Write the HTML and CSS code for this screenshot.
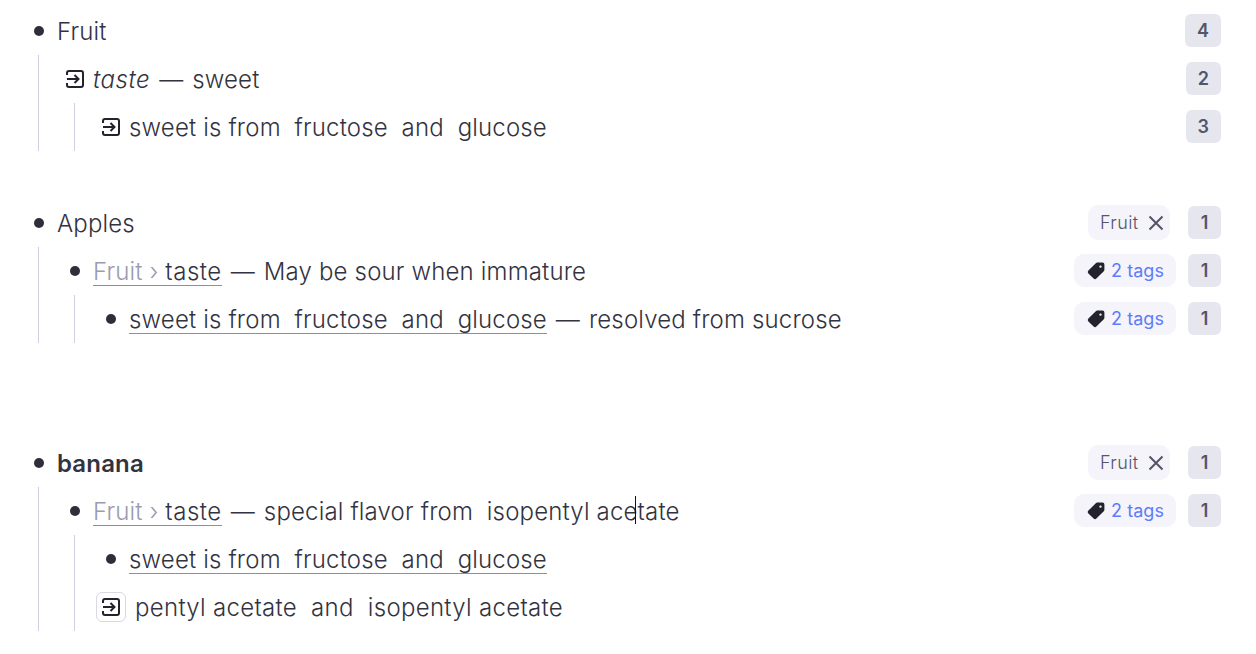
FILE: index.html
```html
<!DOCTYPE html>
<html lang="en">
<head>
  <meta charset="UTF-8" />
  <title>Outline</title>
  <link rel="stylesheet" href="styles.css">
</head>
<body>
  <svg class="sprites" width="0" height="0">
    <symbol id="enter" viewBox="0 0 18 18">
      <path d="M1 5V3a2 2 0 0 1 2-2h12a2 2 0 0 1 2 2v12a2 2 0 0 1-2 2H3a2 2 0 0 1-2-2v-2" fill="none" stroke="currentColor" stroke-width="2"/>
      <path d="M1 9h11M8.500 5l4 4-4 4" fill="none" stroke="currentColor" stroke-width="2"/>
    </symbol>
    <symbol id="tag" viewBox="0 0 18 18">
      <path d="M10.200 .6h5.200a2 2 0 0 1 2 2v5.200a2 2 0 0 1-.6 1.400l-7.400 7.400a2 2 0 0 1-2.800 0l-5.200-5.200a2 2 0 0 1 0-2.800l7.400-7.400a2 2 0 0 1 1.400-.6zM13.500 3.400a1.200 1.200 0 1 0 0 2.400 1.200 1.200 0 0 0 0-2.400z" fill="currentColor" fill-rule="evenodd"/>
    </symbol>
    <symbol id="close" viewBox="0 0 16 16">
      <path d="M1.500 1.500l13 13M14.500 1.500l-13 13" fill="none" stroke="currentColor" stroke-width="2"/>
    </symbol>
  </svg>

  <div class="page">
    <section class="block">
      <div class="row">
        <div class="line"><span class="marker"><i class="dot"></i></span><span class="text">Fruit</span></div>
        <div class="meta"><span class="count">4</span></div>
      </div>
      <div class="children">
        <div class="row">
          <div class="line"><span class="marker"><svg class="icon"><use href="#enter"/></svg></span><span class="text"><em class="term">taste</em> <span class="dash">—</span> sweet</span></div>
          <div class="meta"><span class="count">2</span></div>
        </div>
        <div class="children">
          <div class="row">
            <div class="line"><span class="marker"><svg class="icon"><use href="#enter"/></svg></span><span class="text">sweet is from  fructose  and  glucose</span></div>
            <div class="meta"><span class="count">3</span></div>
          </div>
        </div>
      </div>
    </section>

    <section class="block">
      <div class="row">
        <div class="line"><span class="marker"><i class="dot"></i></span><span class="text">Apples</span></div>
        <div class="meta">
          <span class="pill pill-tall">Fruit <svg class="close"><use href="#close"/></svg></span>
          <span class="count">1</span>
        </div>
      </div>
      <div class="children">
        <div class="row">
          <div class="line"><span class="marker"><i class="dot"></i></span><span class="text"><span class="ref"><span class="crumb">Fruit › </span><span class="term">taste</span></span> <span class="dash">—</span> May be sour when immature</span></div>
          <div class="meta">
            <span class="pill"><svg class="tag"><use href="#tag"/></svg><span class="tags">2 tags</span></span>
            <span class="count">1</span>
          </div>
        </div>
        <div class="children">
          <div class="row">
            <div class="line"><span class="marker"><i class="dot"></i></span><span class="text"><span class="ref">sweet is from  fructose  and  glucose</span> <span class="dash">—</span> resolved from sucrose</span></div>
            <div class="meta">
              <span class="pill"><svg class="tag"><use href="#tag"/></svg><span class="tags">2 tags</span></span>
              <span class="count">1</span>
            </div>
          </div>
        </div>
      </div>
    </section>

    <section class="block block-far">
      <div class="row">
        <div class="line"><span class="marker"><i class="dot"></i></span><strong class="text">banana</strong></div>
        <div class="meta">
          <span class="pill pill-tall">Fruit <svg class="close"><use href="#close"/></svg></span>
          <span class="count">1</span>
        </div>
      </div>
      <div class="children">
        <div class="row">
          <div class="line"><span class="marker"><i class="dot"></i></span><span class="text"><span class="ref"><span class="crumb">Fruit › </span><span class="term">taste</span></span> <span class="dash">—</span> special flavor from  isopentyl ace<span class="caret"></span>tate</span></div>
          <div class="meta">
            <span class="pill"><svg class="tag"><use href="#tag"/></svg><span class="tags">2 tags</span></span>
            <span class="count">1</span>
          </div>
        </div>
        <div class="children">
          <div class="row">
            <div class="line"><span class="marker"><i class="dot"></i></span><span class="text"><span class="ref">sweet is from  fructose  and  glucose</span></span></div>
          </div>
          <div class="row">
            <div class="line"><span class="icon-btn"><svg class="icon"><use href="#enter"/></svg></span><span class="text text-wide">pentyl acetate  and  isopentyl acetate</span></div>
          </div>
        </div>
      </div>
    </section>
  </div>
</body>
</html>
```

FILE: styles.css
```css
* {
  box-sizing: border-box;
}

body {
  margin: 0;
  background: #fff;
  color: #33333f;
  font-family: Inter, "Liberation Sans", sans-serif;
  font-size: 24px;
  font-weight: 350;
  letter-spacing: 0.16px;
}

.sprites {
  position: absolute;
}

.page {
  padding: 7px 35px 0 21px;
}

.block {
  margin-bottom: 48px;
}

.block-far {
  margin-top: 96px;
}

.row {
  display: flex;
  justify-content: space-between;
  align-items: center;
  height: 48px;
  padding-bottom: 1px;
}

.line {
  display: flex;
  align-items: center;
}

.text {
  padding-top: 2px;
  white-space: pre;
}

.text-wide {
  letter-spacing: 0.3px;
}

.term {
  letter-spacing: 0.55px;
}

.marker {
  display: flex;
  justify-content: center;
  align-items: center;
  width: 36px;
  height: 24px;
}

.dot {
  width: 10px;
  height: 10px;
  border-radius: 50%;
  background: #2e2e3a;
}

.icon {
  width: 18px;
  height: 18px;
  color: #23232e;
}

.icon-btn {
  display: flex;
  justify-content: center;
  align-items: center;
  width: 30px;
  height: 30px;
  margin: 0 9px 0 3px;
  border: 1px solid #d9d9e6;
  border-radius: 6px;
}

.children {
  margin-left: 17px;
  padding-left: 18px;
  border-left: 1px solid #cfcfdf;
}

.ref {
  display: inline-block;
  line-height: 27px;
  border-bottom: 1px solid #8f8fa3;
}

.crumb {
  color: #9a9ab0;
}

.dash {
  margin: 0 2px;
}

strong {
  font-weight: 600;
}

.caret {
  position: relative;
}

.caret::after {
  content: "";
  position: absolute;
  left: -3px;
  top: -1px;
  width: 1px;
  height: 28px;
  background: #111;
}

.meta {
  display: flex;
  align-items: center;
  gap: 12px;
  font-size: 18px;
  letter-spacing: 0;
}

.count {
  display: flex;
  justify-content: center;
  align-items: center;
  min-width: 33px;
  height: 33px;
  padding: 0 12px;
  border-radius: 6px;
  background: #e6e6ef;
  color: #55556a;
  font-weight: 600;
}

.pill {
  display: flex;
  align-items: center;
  height: 33px;
  padding: 0 12px;
  border-radius: 10px;
  background: #f4f4fa;
  font-weight: 400;
}

.pill-tall {
  height: 35px;
  margin-right: 6px;
  padding: 0 6px 0 12px;
  color: #55556a;
  font-weight: 350;
  letter-spacing: 0.4px;
  white-space: pre;
}

.tag {
  width: 18px;
  height: 18px;
  margin: 0 6px 0 1px;
  color: #23232e;
}

.tags {
  color: #5c7cfa;
  letter-spacing: 0.05px;
}

.close {
  width: 16px;
  height: 16px;
  margin-left: 4px;
}
```
